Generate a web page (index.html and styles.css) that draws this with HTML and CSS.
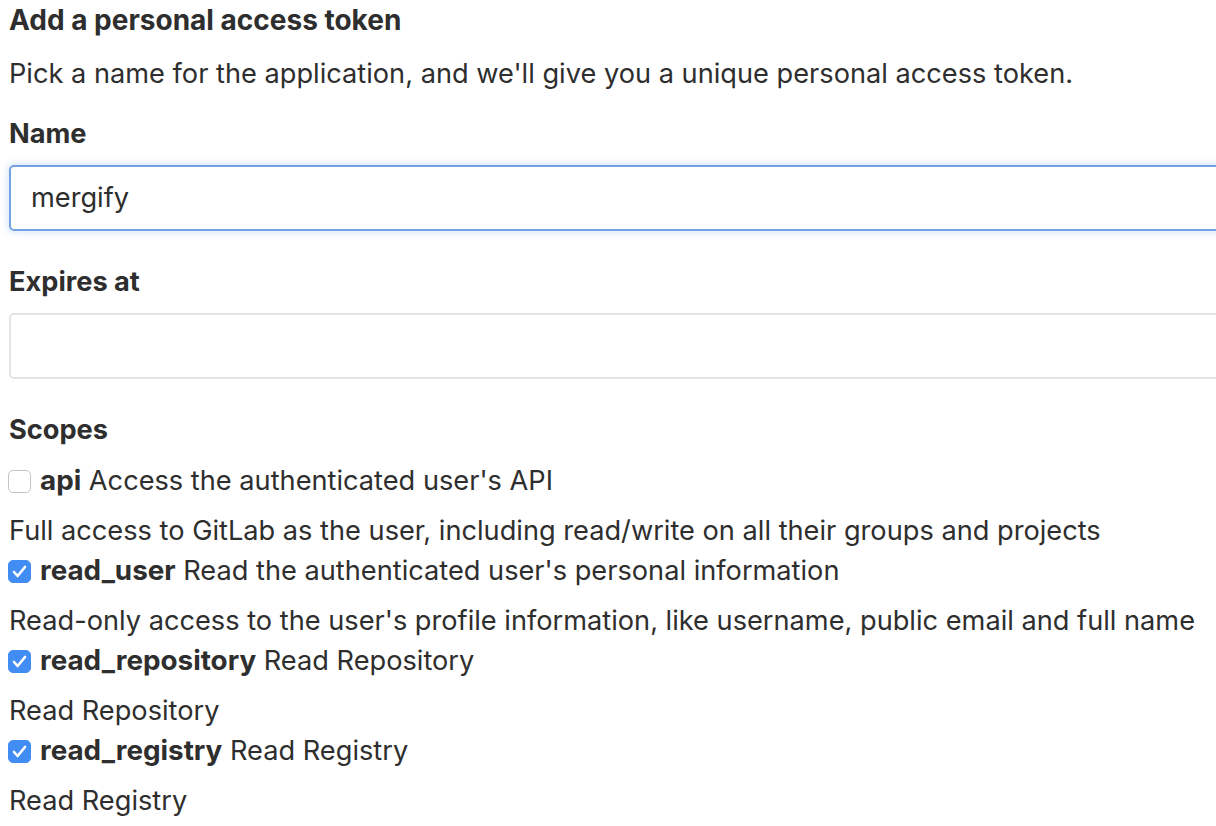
FILE: index.html
```html
<!DOCTYPE html>
<html>
<head>
<meta charset="utf-8">
<link rel="stylesheet" href="styles.css">
</head>
<body>
<div class="page">
  <h4 class="title">Add a personal access token</h4>
  <p class="lead">Pick a name for the application, and we'll give you a unique personal access token.</p>
  <div class="field">
    <label class="label">Name</label>
    <div class="input focused">mergify</div>
  </div>
  <div class="field">
    <label class="label">Expires at</label>
    <div class="input"></div>
  </div>
  <div class="scopes">
    <label class="label">Scopes</label>
    <div class="scope">
      <div class="check-row"><span class="box"></span><strong>api</strong> Access the authenticated user's API</div>
      <p class="desc">Full access to GitLab as the user, including read/write on all their groups and projects</p>
    </div>
    <div class="scope">
      <div class="check-row"><span class="box checked"><svg viewBox="0 0 23 23" width="23" height="23"><path d="M6 12l3.6 4L17 7" fill="none" stroke="#fff" stroke-width="2.6" stroke-linecap="round" stroke-linejoin="round"/></svg></span><strong>read_user</strong> Read the authenticated user's personal information</div>
      <p class="desc">Read-only access to the user's profile information, like username, public email and full name</p>
    </div>
    <div class="scope">
      <div class="check-row"><span class="box checked"><svg viewBox="0 0 23 23" width="23" height="23"><path d="M6 12l3.6 4L17 7" fill="none" stroke="#fff" stroke-width="2.6" stroke-linecap="round" stroke-linejoin="round"/></svg></span><strong>read_repository</strong> Read Repository</div>
      <p class="desc">Read Repository</p>
    </div>
    <div class="scope">
      <div class="check-row"><span class="box checked"><svg viewBox="0 0 23 23" width="23" height="23"><path d="M6 12l3.6 4L17 7" fill="none" stroke="#fff" stroke-width="2.6" stroke-linecap="round" stroke-linejoin="round"/></svg></span><strong>read_registry</strong> Read Registry</div>
      <p class="desc">Read Registry</p>
    </div>
  </div>
</div>
</body>
</html>
```
FILE: styles.css
```css
html, body {
  margin: 0;
  padding: 0;
  background: #fff;
  overflow: hidden;
}
body {
  font-family: Inter, "Noto Sans", "Liberation Sans", sans-serif;
  font-size: 27.2px;
  color: #2e2e2e;
  line-height: 40px;
}
.page {
  padding: 0 0 0 9px;
  width: 1240px;
}
.title {
  margin: 0;
  font-size: 28px;
  font-weight: 700;
  line-height: 40px;
}
.lead {
  margin: 14px 0 0;
}
.field {
  margin-top: 20px;
}
.label {
  display: block;
  font-weight: 700;
  line-height: 40px;
}
.input {
  margin-top: 11px;
  height: 66px;
  box-sizing: border-box;
  border: 2px solid #e5e5e5;
  border-radius: 5px;
  padding: 0 20px;
  display: flex;
  align-items: center;
}
.input.focused {
  border-color: #73a1e2;
  box-shadow: 0 0 6px 2px rgba(115, 161, 226, 0.25);
}
.field + .field {
  margin-top: 31px;
}
.scopes {
  margin-top: 31px;
}
.scope {
  display: block;
}
.check-row {
  margin-top: 0;
  height: 40px;
  white-space: nowrap;
}
.scope:first-of-type .check-row {
  margin-top: 11px;
}
.check-row strong {
  font-weight: 700;
  font-size: 27.8px;
  line-height: 1;
}
.box {
  display: inline-block;
  vertical-align: -3px;
  width: 23px;
  height: 23px;
  margin-left: -1px;
  margin-right: 9px;
  box-sizing: border-box;
  border: 1.5px solid #c4c4c4;
  border-radius: 5px;
  background: #fff;
  overflow: hidden;
}
.box.checked {
  background: #428df3;
  border-color: #428df3;
}
.box svg {
  display: block;
  margin: -1.5px;
}
.desc {
  margin: 10px 0 0;
}
```
